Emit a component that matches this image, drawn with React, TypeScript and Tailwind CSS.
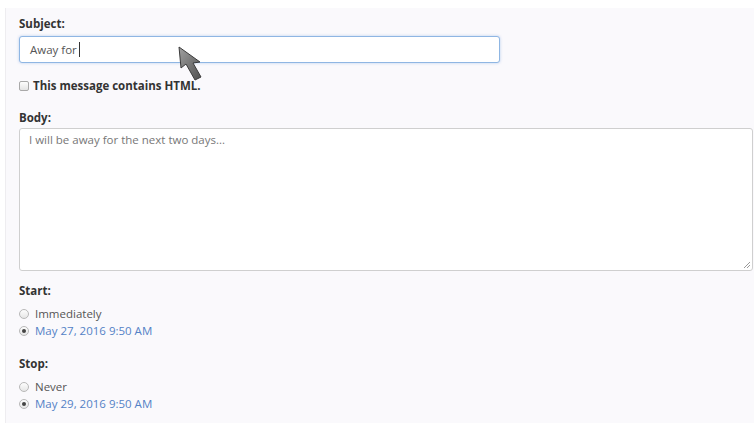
import React from 'react';

const font = { fontFamily: '"Open Sans", "Noto Sans", sans-serif' };

function Radio({ checked, label, link }: { checked?: boolean; label: string; link?: boolean }) {
  return (
    <label className="flex items-center gap-[6px] h-[17px]">
      <span className="w-[10px] h-[10px] rounded-full border border-[#b8b8b8] bg-[linear-gradient(#fdfdfd,#e6e6e6)] flex items-center justify-center">
        {checked && <span className="w-[4px] h-[4px] rounded-full bg-[#444]" />}
      </span>
      <span className={`text-[11.5px] ${link ? 'text-[#5482c6]' : 'text-[#555]'}`}>{label}</span>
    </label>
  );
}

function Cursor() {
  return (
    <svg className="absolute left-[170px] top-[36px] blur-[0.4px]" width="34" height="42" viewBox="0 0 34 42">
      <defs>
        <linearGradient id="cg" x1="0" y1="0" x2="1" y2="1">
          <stop offset="0" stopColor="#a0a0a0" />
          <stop offset="1" stopColor="#505050" />
        </linearGradient>
      </defs>
      <polygon points="3,3 5,24 10,20 19,36 25,33 17,19 24,18" fill="url(#cg)" stroke="#3a3a3a" strokeWidth="1" strokeLinejoin="round" />
    </svg>
  );
}

export default function App() {
  return (
    <div className="w-[754px] h-[423px] bg-white overflow-hidden" style={font}>
      <div className="relative ml-[5px] mt-[8px] h-[415px] bg-[#faf9fc] border-l border-[#eeedf0] pl-[13px] pt-[7px] pr-[2px]">
        <div className="text-[11.5px] font-bold text-[#333] leading-[17px]">Subject:</div>
        <div className="mt-[4px] w-[481px] h-[27px] rounded-[3px] border border-[#8fb6e3] bg-white shadow-[0_0_3px_rgba(102,150,220,0.45)] flex items-center pl-[10px] pr-[7px] text-[11.5px] text-[#555]">
          Away for<span className="ml-[2px] inline-block w-px h-[15px] bg-[#333]" />
        </div>
        <label className="mt-[15px] flex items-center gap-[4px] h-[15px]">
          <span className="w-[10px] h-[10px] rounded-[2px] border border-[#a9a9a9] bg-[linear-gradient(#fdfdfd,#e4e4e4)]" />
          <span className="text-[11.5px] font-bold text-[#333]">This message contains HTML.</span>
        </label>
        <div className="mt-[16px] text-[11.5px] font-bold text-[#333] leading-[17px]">Body:</div>
        <div className="relative mt-[2px] w-[734px] h-[143px] rounded-[3px] border border-[#cfcfcf] bg-white pl-[9px] pr-[7px] pt-[2px] text-[11.5px] text-[#777]">
          I will be away for the next two days...
          <svg className="absolute right-[1px] bottom-[1px]" width="8" height="8" viewBox="0 0 8 8">
            <path d="M7 1 L1 7 M7 4 L4 7" stroke="#9a9a9a" strokeWidth="1" />
          </svg>
        </div>
        <div className="mt-[11px] text-[11.5px] font-bold text-[#333] leading-[17px]">Start:</div>
        <div className="mt-[6px] flex flex-col">
          <Radio label="Immediately" />
          <Radio checked link label="May 27, 2016 9:50 AM" />
        </div>
        <div className="mt-[16px] text-[11.5px] font-bold text-[#333] leading-[17px]">Stop:</div>
        <div className="mt-[6px] flex flex-col">
          <Radio label="Never" />
          <Radio checked link label="May 29, 2016 9:50 AM" />
        </div>
        <Cursor />
      </div>
    </div>
  );
}
